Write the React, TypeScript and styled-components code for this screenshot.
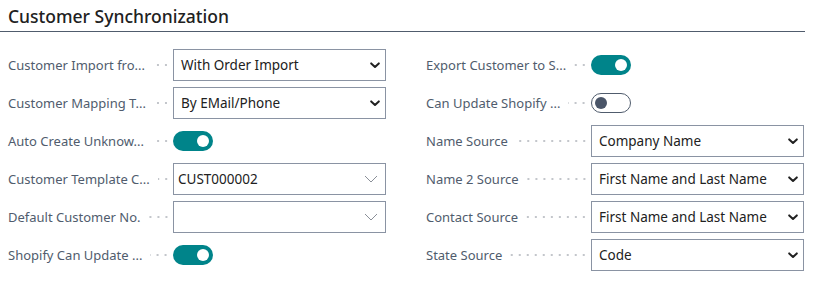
import React from "react";
import styled, { createGlobalStyle, css } from "styled-components";

const Global = createGlobalStyle`
  html, body { margin: 0; padding: 0; background: #ffffff; }
  body { font-family: "Segoe UI", "Noto Sans", "Open Sans", sans-serif; }
`;

const Page = styled.div`
  width: 805px;
`;

const Header = styled.div`
  padding: 5px 0 4px 8px;
  border-bottom: 1px solid #505c6d;
`;

const Title = styled.h2`
  margin: 0;
  font-size: 17.5px;
  font-weight: 500;
  color: #212121;
  line-height: 22px;
`;

const Form = styled.div`
  display: grid;
  grid-template-columns: 378px 378px;
  column-gap: 40px;
  padding: 17px 0 0 8px;
`;

const Column = styled.div`
  display: flex;
  flex-direction: column;
  gap: 6px;
`;

const Row = styled.div`
  display: flex;
  align-items: center;
  height: 32px;
`;

const LabelArea = styled.div`
  display: flex;
  align-items: center;
  width: 165px;
  flex: none;
  height: 100%;
`;

const Label = styled.span`
  font-size: 13px;
  color: #505c6d;
  white-space: nowrap;
  flex: none;
`;

const Leader = styled.span`
  flex: 1;
  height: 4px;
  margin: 0 3px 0 8px;
  background-image: radial-gradient(circle at 4px 2px, #c3c6cb 0.9px, transparent 1.3px);
  background-size: 8px 4px;
  background-repeat: repeat-x;
  background-position: right center;
`;

const Field = styled.div<{ $lookup?: boolean }>`
  box-sizing: border-box;
  width: 213px;
  height: 32px;
  border: 1px solid #8a93a3;
  display: flex;
  align-items: center;
  justify-content: space-between;
  padding: ${(p) => (p.$lookup ? "0 7px 0 4px" : "0 5px 0 7px")};
  font-size: 13.5px;
  color: #212121;
  white-space: nowrap;
`;

const Toggle = styled.div<{ $on: boolean }>`
  box-sizing: border-box;
  width: 40px;
  height: 20px;
  border-radius: 10px;
  display: flex;
  align-items: center;
  padding: 0 4px;
  ${(p) =>
    p.$on
      ? css`
          background: #00848a;
          justify-content: flex-end;
        `
      : css`
          background: #ffffff;
          border: 1px solid #505c6d;
          padding: 0 3px;
          justify-content: flex-start;
        `}
`;

const Knob = styled.span<{ $on: boolean }>`
  width: 12px;
  height: 12px;
  border-radius: 50%;
  background: ${(p) => (p.$on ? "#ffffff" : "#4a5568")};
`;

const BoldChevron = () => (
  <svg width="10" height="7" viewBox="0 0 10 7">
    <path d="M1.2 1.4 L5 5 L8.8 1.4" fill="none" stroke="#212121" strokeWidth="2" strokeLinecap="round" strokeLinejoin="round" />
  </svg>
);

const ThinChevron = () => (
  <svg width="14" height="8" viewBox="0 0 14 8">
    <path d="M1 1 L7 7 L13 1" fill="none" stroke="#8a8f98" strokeWidth="1" />
  </svg>
);

type Item =
  | { label: string; kind: "select"; value: string }
  | { label: string; kind: "lookup"; value: string }
  | { label: string; kind: "toggle"; on: boolean };

const left: Item[] = [
  { label: "Customer Import fro...", kind: "select", value: "With Order Import" },
  { label: "Customer Mapping T...", kind: "select", value: "By EMail/Phone" },
  { label: "Auto Create Unknow...", kind: "toggle", on: true },
  { label: "Customer Template C...", kind: "lookup", value: "CUST000002" },
  { label: "Default Customer No.", kind: "lookup", value: "" },
  { label: "Shopify Can Update ...", kind: "toggle", on: true },
];

const right: Item[] = [
  { label: "Export Customer to S...", kind: "toggle", on: true },
  { label: "Can Update Shopify ...", kind: "toggle", on: false },
  { label: "Name Source", kind: "select", value: "Company Name" },
  { label: "Name 2 Source", kind: "select", value: "First Name and Last Name" },
  { label: "Contact Source", kind: "select", value: "First Name and Last Name" },
  { label: "State Source", kind: "select", value: "Code" },
];

const Control = ({ item }: { item: Item }) => {
  if (item.kind === "toggle") {
    return (
      <Toggle $on={item.on}>
        <Knob $on={item.on} />
      </Toggle>
    );
  }
  if (item.kind === "lookup") {
    return (
      <Field $lookup>
        <span>{item.value}</span>
        <ThinChevron />
      </Field>
    );
  }
  return (
    <Field>
      <span>{item.value}</span>
      <BoldChevron />
    </Field>
  );
};

const FieldColumn = ({ items }: { items: Item[] }) => (
  <Column>
    {items.map((it) => (
      <Row key={it.label}>
        <LabelArea>
          <Label>{it.label}</Label>
          <Leader />
        </LabelArea>
        <Control item={it} />
      </Row>
    ))}
  </Column>
);

export default function App() {
  return (
    <Page>
      <Global />
      <Header>
        <Title>Customer Synchronization</Title>
      </Header>
      <Form>
        <FieldColumn items={left} />
        <FieldColumn items={right} />
      </Form>
    </Page>
  );
}
